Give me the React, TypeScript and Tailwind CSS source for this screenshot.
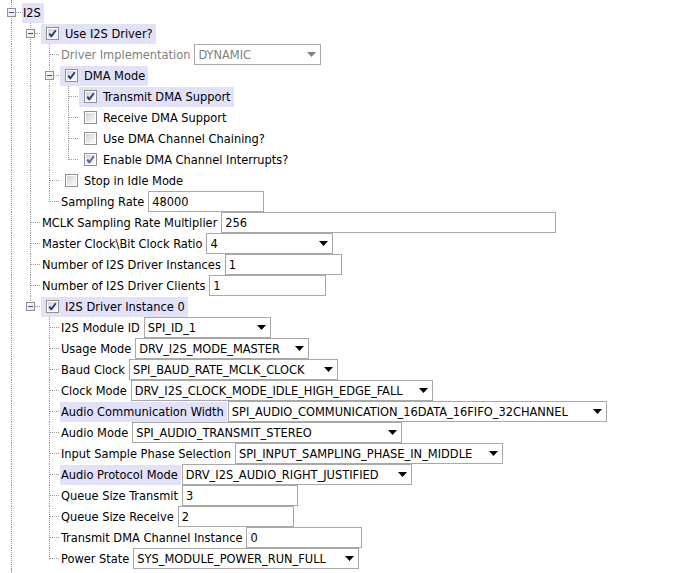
import React from 'react';

type Field = { type: 'input' | 'select'; value: string; w: string; disabled?: boolean };
type N = {
  label: string;
  kind: 'group' | 'check' | 'text';
  checked?: boolean;
  soft?: boolean;
  dim?: boolean;
  hl?: boolean;
  field?: Field;
  children?: N[];
};

const tree: N = {
  label: 'I2S',
  kind: 'group',
  hl: true,
  children: [
    {
      label: 'Use I2S Driver?',
      kind: 'check',
      checked: true,
      hl: true,
      children: [
        {
          label: 'Driver Implementation',
          kind: 'text',
          dim: true,
          field: { type: 'select', value: 'DYNAMIC', w: 'w-[127px]', disabled: true },
        },
        {
          label: 'DMA Mode',
          kind: 'check',
          checked: true,
          hl: true,
          children: [
            { label: 'Transmit DMA Support', kind: 'check', checked: true, hl: true },
            { label: 'Receive DMA Support', kind: 'check' },
            { label: 'Use DMA Channel Chaining?', kind: 'check' },
            { label: 'Enable DMA Channel Interrupts?', kind: 'check', checked: true, soft: true },
          ],
        },
        { label: 'Stop in Idle Mode', kind: 'check' },
        { label: 'Sampling Rate', kind: 'text', field: { type: 'input', value: '48000', w: 'w-[116px]' } },
      ],
    },
    { label: 'MCLK Sampling Rate Multiplier', kind: 'text', field: { type: 'input', value: '256', w: 'w-[335px]' } },
    { label: 'Master Clock\\Bit Clock Ratio', kind: 'text', field: { type: 'select', value: '4', w: 'w-[127px]' } },
    { label: 'Number of I2S Driver Instances', kind: 'text', field: { type: 'input', value: '1', w: 'w-[117px]' } },
    { label: 'Number of I2S Driver Clients', kind: 'text', field: { type: 'input', value: '1', w: 'w-[117px]' } },
    {
      label: 'I2S Driver Instance 0',
      kind: 'check',
      checked: true,
      hl: true,
      children: [
        { label: 'I2S Module ID', kind: 'text', field: { type: 'select', value: 'SPI_ID_1', w: 'w-[127px]' } },
        { label: 'Usage Mode', kind: 'text', field: { type: 'select', value: 'DRV_I2S_MODE_MASTER', w: 'w-[174px]' } },
        { label: 'Baud Clock', kind: 'text', field: { type: 'select', value: 'SPI_BAUD_RATE_MCLK_CLOCK', w: 'w-[209px]' } },
        { label: 'Clock Mode', kind: 'text', field: { type: 'select', value: 'DRV_I2S_CLOCK_MODE_IDLE_HIGH_EDGE_FALL', w: 'w-[302px]' } },
        {
          label: 'Audio Communication Width',
          kind: 'text',
          hl: true,
          field: { type: 'select', value: 'SPI_AUDIO_COMMUNICATION_16DATA_16FIFO_32CHANNEL', w: 'w-[379px]' },
        },
        { label: 'Audio Mode', kind: 'text', field: { type: 'select', value: 'SPI_AUDIO_TRANSMIT_STEREO', w: 'w-[270px]' } },
        {
          label: 'Input Sample Phase Selection',
          kind: 'text',
          field: { type: 'select', value: 'SPI_INPUT_SAMPLING_PHASE_IN_MIDDLE', w: 'w-[268px]' },
        },
        {
          label: 'Audio Protocol Mode',
          kind: 'text',
          hl: true,
          field: { type: 'select', value: 'DRV_I2S_AUDIO_RIGHT_JUSTIFIED', w: 'w-[230px]' },
        },
        { label: 'Queue Size Transmit', kind: 'text', field: { type: 'input', value: '3', w: 'w-[116px]' } },
        { label: 'Queue Size Receive', kind: 'text', field: { type: 'input', value: '2', w: 'w-[116px]' } },
        { label: 'Transmit DMA Channel Instance', kind: 'text', field: { type: 'input', value: '0', w: 'w-[116px]' } },
        { label: 'Power State', kind: 'text', field: { type: 'select', value: 'SYS_MODULE_POWER_RUN_FULL', w: 'w-[226px]' } },
      ],
    },
  ],
};

type Row = { node: N; guides: boolean[]; last: boolean };

function flatten(n: N, guides: boolean[], last: boolean, out: Row[]) {
  out.push({ node: n, guides, last });
  const ch = n.children ?? [];
  ch.forEach((c, i) => flatten(c, [...guides, !last], i === ch.length - 1, out));
}

const LINE = 'border-[#9a9a9a]';

function Guide({ on }: { on: boolean }) {
  return (
    <div className="relative h-full w-[19px] shrink-0">
      {on && <div className={`absolute left-[9px] top-0 bottom-0 border-l border-dotted ${LINE}`} />}
    </div>
  );
}

function Expander() {
  return (
    <svg width="9" height="9" viewBox="0 0 9 9" className="absolute left-[5px] top-[6px]">
      <defs>
        <linearGradient id="exg" x1="0" y1="0" x2="1" y2="1">
          <stop offset="0" stopColor="#ffffff" />
          <stop offset="1" stopColor="#e4e4e4" />
        </linearGradient>
      </defs>
      <rect x="0.5" y="0.5" width="8" height="8" fill="url(#exg)" stroke="#919191" />
      <path d="M2 4.5h5" stroke="#2f4f8f" strokeWidth="1" />
    </svg>
  );
}

function Own({ last, exp }: { last: boolean; exp: boolean }) {
  return (
    <div className="relative h-full w-[19px] shrink-0">
      <div className={`absolute left-[9px] top-0 border-l border-dotted ${LINE} ${last ? 'h-[11px]' : 'bottom-0'}`} />
      <div className={`absolute left-[10px] right-0 top-[10px] border-t border-dotted ${LINE}`} />
      {exp && <Expander />}
    </div>
  );
}

function Checkbox({ checked, soft }: { checked?: boolean; soft?: boolean }) {
  return (
    <svg width="13" height="13" viewBox="0 0 13 13" className="shrink-0">
      <defs>
        <linearGradient id="cbg" x1="0" y1="0" x2="1" y2="1">
          <stop offset="0" stopColor="#d2d2d2" />
          <stop offset="1" stopColor="#fafafa" />
        </linearGradient>
      </defs>
      <rect x="0.5" y="0.5" width="12" height="12" fill="#ffffff" stroke="#8f8f8f" />
      <rect x="2" y="2" width="9" height="9" fill="url(#cbg)" />
      {checked && (
        <path
          d="M3.3 6.6 L5.4 9.3 L9.8 3.2"
          stroke={soft ? '#4c62a0' : '#23397f'}
          strokeWidth="1.9"
          fill="none"
          strokeLinejoin="round"
        />
      )}
    </svg>
  );
}

function FieldBox({ f }: { f: Field }) {
  const color = f.disabled ? 'text-[#808080]' : 'text-black';
  return (
    <div
      className={`ml-px flex h-[21px] shrink-0 items-center justify-between border border-[#a8a8a8] bg-white pl-[3px] pr-[4px] ${f.w} ${color}`}
    >
      <span className="whitespace-nowrap pt-px">{f.value}</span>
      {f.type === 'select' && (
        <svg width="9" height="5" viewBox="0 0 9 5" className="shrink-0">
          <path d="M0 0h9L4.5 5z" fill={f.disabled ? '#808080' : '#000000'} />
        </svg>
      )}
    </div>
  );
}

function Label({ n }: { n: N }) {
  const hl = n.hl ? 'bg-[#e1e1fa]' : '';
  if (n.kind === 'check') {
    return (
      <div className={`ml-px flex h-[20px] items-center pl-[5px] pr-[3px] ${hl}`}>
        <Checkbox checked={n.checked} soft={n.soft} />
        <span className="ml-[6px] whitespace-nowrap pt-px">{n.label}</span>
      </div>
    );
  }
  return (
    <>
      <div
        className={`ml-px flex h-[20px] items-center pl-px pr-[3px] whitespace-nowrap ${hl} ${
          n.dim ? 'text-[#808080]' : 'text-black'
        }`}
      >
        <span className="pt-px">{n.label}</span>
      </div>
      {n.field && <FieldBox f={n.field} />}
    </>
  );
}

export default function App() {
  const rows: Row[] = [];
  flatten(tree, [], false, rows);
  return (
    <div
      className="min-h-screen bg-white pl-[2px] text-[12.7px] leading-none text-black"
      style={{ fontFamily: '"DejaVu Sans Condensed", "DejaVu Sans", sans-serif', fontStretch: 'condensed' }}
    >
      <div className="flex h-[2px]">
        <Guide on />
      </div>
      {rows.map((r, i) => (
        <div key={i} className="flex h-[21px] items-center">
          {r.guides.map((g, j) => (
            <Guide key={j} on={g} />
          ))}
          <Own last={r.last} exp={!!r.node.children} />
          <Label n={r.node} />
        </div>
      ))}
      <div className="flex h-[10px]">
        <Guide on />
      </div>
    </div>
  );
}
